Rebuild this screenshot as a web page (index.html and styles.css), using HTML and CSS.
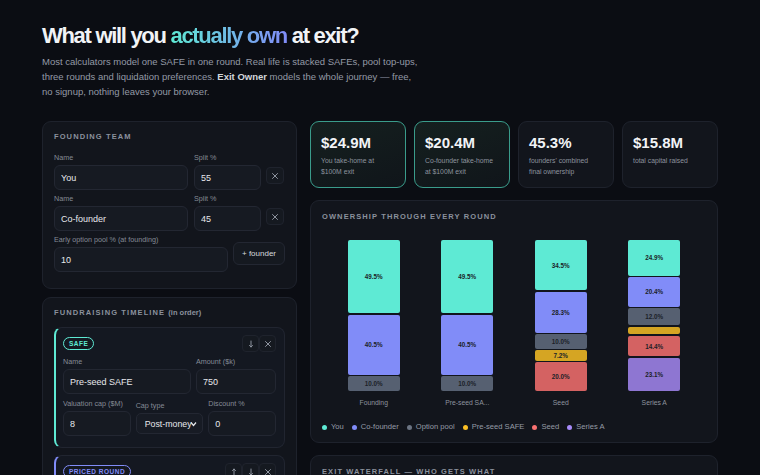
FILE: index.html
```html
<!DOCTYPE html>
<html>
<head>
<meta charset="utf-8">
<title>Exit Owner</title>
<link rel="stylesheet" href="styles.css">
</head>
<body>
<div class="page">
  <header class="intro">
    <h1>What will you <span class="grad">actually own</span> at exit?</h1>
    <p>Most calculators model one SAFE in one round. Real life is stacked SAFEs, pool top-ups,<br>three rounds and liquidation preferences. <b>Exit Owner</b> models the whole journey — free,<br>no signup, nothing leaves your browser.</p>
  </header>

  <div class="layout">
    <!-- inputs -->
    <div class="col">
      <section class="card team">
        <h2 class="card-title">Founding team</h2>
        <div class="founder-row">
          <div class="field"><span class="lbl">Name</span><input class="inp" value="You"></div>
          <div class="field"><span class="lbl">Split %</span><input class="inp" value="55"></div>
          <button class="icon-btn x-btn"><svg width="8" height="8" viewBox="0 0 8 8"><path d="M1.5 1.5l5 5M6.5 1.5l-5 5"/></svg></button>
        </div>
        <div class="founder-row">
          <div class="field"><span class="lbl">Name</span><input class="inp" value="Co-founder"></div>
          <div class="field"><span class="lbl">Split %</span><input class="inp" value="45"></div>
          <button class="icon-btn x-btn"><svg width="8" height="8" viewBox="0 0 8 8"><path d="M1.5 1.5l5 5M6.5 1.5l-5 5"/></svg></button>
        </div>
        <div class="pool-row">
          <div class="field"><span class="lbl">Early option pool % (at founding)</span><input class="inp" value="10"></div>
          <button class="ghost-btn">+ founder</button>
        </div>
      </section>

      <section class="card timeline">
        <h2 class="card-title">Fundraising timeline <span class="sub">(in order)</span></h2>

        <div class="round round-safe">
          <div class="round-head">
            <span class="pill">SAFE</span>
            <div class="round-tools">
              <button class="icon-btn"><svg width="8" height="8" viewBox="0 0 8 8"><path d="M4 1v6M2.5 5.5L4 7l1.5-1.5"/></svg></button>
              <button class="icon-btn"><svg width="8" height="8" viewBox="0 0 8 8"><path d="M1.5 1.5l5 5M6.5 1.5l-5 5"/></svg></button>
            </div>
          </div>
          <div class="grid-2">
            <div class="field"><span class="lbl">Name</span><input class="inp" value="Pre-seed SAFE"></div>
            <div class="field"><span class="lbl">Amount ($k)</span><input class="inp" value="750"></div>
          </div>
          <div class="grid-3">
            <div class="field"><span class="lbl">Valuation cap ($M)</span><input class="inp" value="8"></div>
            <div class="field"><span class="lbl">Cap type</span>
              <div class="sel"><span>Post-money (standard)</span><svg width="7" height="6" viewBox="0 0 7 6"><path d="M1 1.5l2.5 3 2.5-3"/></svg></div>
            </div>
            <div class="field"><span class="lbl">Discount %</span><input class="inp" value="0"></div>
          </div>
        </div>

        <div class="round round-priced">
          <div class="round-head">
            <span class="pill">PRICED ROUND</span>
            <div class="round-tools">
              <button class="icon-btn"><svg width="8" height="8" viewBox="0 0 8 8"><path d="M4 7V1M2.5 2.5L4 1l1.5 1.5"/></svg></button>
              <button class="icon-btn"><svg width="8" height="8" viewBox="0 0 8 8"><path d="M4 1v6M2.5 5.5L4 7l1.5-1.5"/></svg></button>
              <button class="icon-btn"><svg width="8" height="8" viewBox="0 0 8 8"><path d="M1.5 1.5l5 5M6.5 1.5l-5 5"/></svg></button>
            </div>
          </div>
          <div class="grid-2">
            <div class="field"><span class="lbl">Name</span><input class="inp" value="Seed"></div>
            <div class="field"><span class="lbl">Amount ($k)</span><input class="inp" value="3000"></div>
          </div>
        </div>
      </section>
    </div>

    <!-- results -->
    <div class="col">
      <div class="stats">
        <div class="stat hl"><div class="val">$24.9M</div><div class="cap">You take-home at<br>$100M exit</div></div>
        <div class="stat hl"><div class="val">$20.4M</div><div class="cap">Co-founder take-home<br>at $100M exit</div></div>
        <div class="stat"><div class="val">45.3%</div><div class="cap">founders' combined<br>final ownership</div></div>
        <div class="stat"><div class="val">$15.8M</div><div class="cap">total capital raised</div></div>
      </div>

      <section class="card chart-card">
        <h2 class="card-title">Ownership through every round</h2>
        <div class="bars">
          <div class="bar-col">
            <div class="bar">
              <div class="seg you" style="flex-grow:49.5">49.5%</div>
              <div class="seg cof" style="flex-grow:40.5">40.5%</div>
              <div class="seg pool" style="flex-grow:10">10.0%</div>
            </div>
            <div class="bar-lbl">Founding</div>
          </div>
          <div class="bar-col">
            <div class="bar">
              <div class="seg you" style="flex-grow:49.5">49.5%</div>
              <div class="seg cof" style="flex-grow:40.5">40.5%</div>
              <div class="seg pool" style="flex-grow:10">10.0%</div>
            </div>
            <div class="bar-lbl">Pre-seed SA...</div>
          </div>
          <div class="bar-col">
            <div class="bar">
              <div class="seg you" style="flex-grow:34.5">34.5%</div>
              <div class="seg cof" style="flex-grow:28.3">28.3%</div>
              <div class="seg pool" style="flex-grow:10">10.0%</div>
              <div class="seg safe" style="flex-grow:7.2">7.2%</div>
              <div class="seg seed" style="flex-grow:20">20.0%</div>
            </div>
            <div class="bar-lbl">Seed</div>
          </div>
          <div class="bar-col">
            <div class="bar">
              <div class="seg you" style="flex-grow:24.9">24.9%</div>
              <div class="seg cof" style="flex-grow:20.4">20.4%</div>
              <div class="seg pool" style="flex-grow:12">12.0%</div>
              <div class="seg safe" style="flex-grow:5.2"></div>
              <div class="seg seed" style="flex-grow:14.4">14.4%</div>
              <div class="seg sera" style="flex-grow:23.1">23.1%</div>
            </div>
            <div class="bar-lbl">Series A</div>
          </div>
        </div>
        <div class="legend">
          <span><i class="dot you"></i>You</span>
          <span><i class="dot cof"></i>Co-founder</span>
          <span><i class="dot pool"></i>Option pool</span>
          <span><i class="dot safe"></i>Pre-seed SAFE</span>
          <span><i class="dot seed"></i>Seed</span>
          <span><i class="dot sera"></i>Series A</span>
        </div>
      </section>

      <section class="card waterfall">
        <h2 class="card-title">Exit waterfall — who gets what</h2>
      </section>
    </div>
  </div>
</div>
</body>
</html>
```
FILE: styles.css
```css
* {
    box-sizing: border-box;
}

body {
    margin: 0;
    background: #0b0d13;
    color: #e6e8ec;
    font-family: "Liberation Sans", Arial, sans-serif;
}

.page {
    width: 676px;
    margin: 0 auto;
    padding: 22px 0 40px;
}

/* heading */
h1 {
    margin: 0;
    font-size: 22px;
    line-height: 28px;
    letter-spacing: -1.3px;
    color: #f1f3f6;
}
.grad {
    background: linear-gradient(90deg, #5eead4, #818cf8);
    -webkit-background-clip: text;
    background-clip: text;
    color: transparent;
}
.intro p {
    margin: 4px 0 22px;
    font-size: 9.5px;
    line-height: 15px;
    color: #949aa6;
}
.intro b {
    color: #d3d6dc;
}

.layout {
    display: grid;
    grid-template-columns: 255px 408px;
    gap: 13px;
    align-items: start;
}
.col {
    display: flex;
    flex-direction: column;
    gap: 8px;
}
.col + .col {
    gap: 12px;
}

.card {
    background: #12151c;
    border: 1px solid #1e222c;
    border-radius: 9px;
    padding: 9px 11px 16px;
}
.card-title {
    margin: 0;
    font-size: 7.5px;
    line-height: 12px;
    font-weight: bold;
    text-transform: uppercase;
    letter-spacing: 1.1px;
    color: #8b919c;
}
.card-title .sub {
    text-transform: none;
    letter-spacing: 0;
    font-size: 7.5px;
}

/* form bits */
.field {
    display: flex;
    flex-direction: column;
    min-width: 0;
}
.lbl {
    font-size: 7.2px;
    line-height: 10px;
    margin-bottom: 2px;
    color: #858b96;
    white-space: nowrap;
}
.inp {
    width: 100%;
    height: 25px;
    background: #161a22;
    border: 1px solid #232732;
    border-radius: 6px;
    padding: 0 6px;
    font-family: inherit;
    font-size: 9px;
    color: #e6e8ec;
    outline: none;
}
.icon-btn {
    width: 17px;
    height: 17px;
    padding: 0;
    display: flex;
    align-items: center;
    justify-content: center;
    background: #151920;
    border: 1px solid #1f232d;
    border-radius: 4px;
}
.icon-btn svg path {
    fill: none;
    stroke: #8e949f;
    stroke-width: 1;
    stroke-linecap: round;
}
.ghost-btn {
    height: 23px;
    width: 52px;
    padding: 0;
    background: #151920;
    border: 1px solid #232732;
    border-radius: 6px;
    font-family: inherit;
    font-size: 8px;
    color: #d6d9de;
}

.team .card-title {
    margin-bottom: 10px;
}
.founder-row {
    display: grid;
    grid-template-columns: 2fr 1fr 18px;
    gap: 6px;
    align-items: end;
    margin-bottom: 4px;
}
.founder-row .x-btn {
    width: 18px;
    margin-bottom: 6px;
    margin-left: -1px;
}
.pool-row {
    display: flex;
    align-items: center;
    gap: 5px;
}
.pool-row .field {
    flex: 1;
}

/* rounds */
.timeline {
    padding-bottom: 30px;
}
.timeline .card-title {
    margin-bottom: 8px;
}
.round {
    background: #141821;
    border: 1px solid #212530;
    border-left: 2px solid #5eead4;
    border-radius: 8px;
    padding: 7px 8px 11px 7px;
    margin-bottom: 7px;
}
.round-priced {
    border-left-color: #818cf8;
}
.round-head {
    display: flex;
    align-items: center;
    justify-content: space-between;
    height: 17px;
    margin-bottom: 5px;
}
.round-tools {
    display: flex;
}
.pill {
    height: 13px;
    padding: 0 5px;
    border: 1px solid #5eead4;
    border-radius: 7px;
    font-size: 6.5px;
    line-height: 11px;
    font-weight: bold;
    letter-spacing: 0.5px;
    color: #5eead4;
}
.round-priced .pill {
    border-color: #818cf8;
    color: #818cf8;
}
.grid-2 {
    display: grid;
    grid-template-columns: 1.6fr 1fr;
    gap: 5px;
    margin-bottom: 5px;
}
.grid-3 {
    display: grid;
    grid-template-columns: 1fr 1fr 1fr;
    gap: 5px;
    align-items: center;
}
.sel {
    height: 21px;
    display: flex;
    align-items: center;
    padding: 0 5px 0 8px;
    background: #171b24;
    border: 1px solid #232732;
    border-radius: 5px;
    font-size: 8.8px;
    color: #e6e8ec;
}
.sel span {
    flex: 1;
    overflow: hidden;
    white-space: nowrap;
}
.sel svg {
    margin-left: -2px;
}
.sel svg path {
    fill: none;
    stroke: #e6e8ec;
    stroke-width: 1.2;
}

/* stat tiles */
.stats {
    display: grid;
    grid-template-columns: repeat(4, 1fr);
    gap: 8px;
}
.stat {
    height: 67px;
    background: #12151c;
    border: 1px solid #1e222c;
    border-radius: 9px;
    padding: 12px 10px 0;
}
.stat.hl {
    border-color: #3a9c8b;
    background: linear-gradient(160deg, #15201f, #10151a);
}
.val {
    font-size: 15px;
    line-height: 18px;
    font-weight: bold;
    color: #f1f3f6;
    margin-bottom: 4px;
}
.cap {
    font-size: 6.8px;
    line-height: 10.5px;
    color: #8d939e;
}

/* ownership chart */
.chart-card {
    padding: 10px 11px 10px;
}
.chart-card .card-title {
    margin-bottom: 17px;
}
.bars {
    display: grid;
    grid-template-columns: repeat(4, 1fr);
    padding: 0 5px;
}
.bar-col {
    display: flex;
    flex-direction: column;
    align-items: center;
}
.bar {
    width: 52px;
    height: 151px;
    display: flex;
    flex-direction: column;
    gap: 1.5px;
}
.seg {
    flex-basis: 0;
    display: flex;
    align-items: center;
    justify-content: center;
    border-radius: 2px;
    font-size: 6.3px;
    font-weight: bold;
    color: #1b1f28;
}
.you { background: #5eead4; }
.cof { background: #818cf8; }
.pool { background: #566071; }
.safe { background: #d5a523; }
.seed { background: #d46262; }
.sera { background: #8e76d2; }
.bar-lbl {
    margin-top: 7px;
    font-size: 6.8px;
    line-height: 10px;
    color: #8d939e;
}
.legend {
    display: flex;
    gap: 8px;
    margin-top: 14px;
    font-size: 7.6px;
    line-height: 10px;
    color: #959ba6;
}
.legend span {
    display: flex;
    align-items: center;
    gap: 4px;
}
.dot {
    width: 5px;
    height: 5px;
    border-radius: 50%;
}
.dot.pool { background: #6b7483; }
.dot.safe { background: #fbbf24; }
.dot.seed { background: #f87171; }
.dot.sera { background: #a78bfa; }

.waterfall {
    height: 160px;
    padding-top: 10px;
}
```
